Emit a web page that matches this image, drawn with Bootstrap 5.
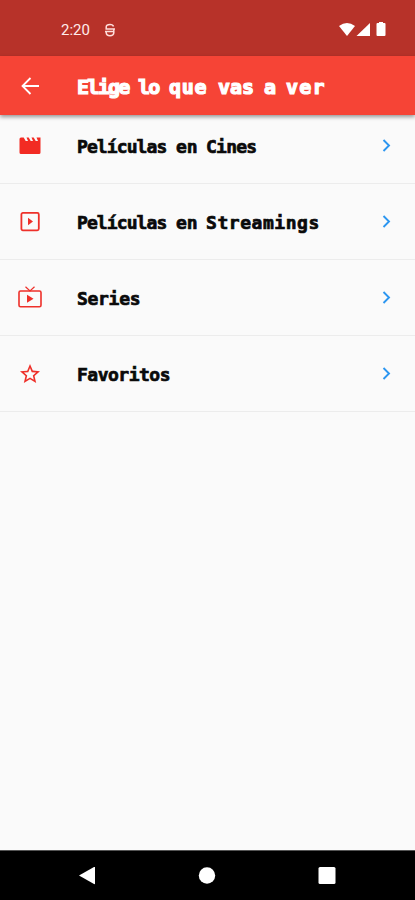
<!DOCTYPE html>
<html lang="es">
<head>
<meta charset="utf-8">
<meta name="viewport" content="width=device-width, initial-scale=1">
<title>Elige lo que vas a ver</title>
<link href="https://cdn.jsdelivr.net/npm/bootstrap@5.3.0/dist/css/bootstrap.min.css" rel="stylesheet">
<style>
  html, body { height: 100%; }
  body { background: #fafafa; font-family: Roboto, sans-serif; overflow: hidden; }
  svg { display: block; flex: none; }
  .status-bar { height: 56px; background: #b73229; padding: 4px 28px 0 61px; font-size: 15px; }
  .status-bar .clock { width: 43px; color: #ffeceb; }
  .app-bar { height: 59px; background: #f64436; padding: 0 0 0 18px; box-shadow: 0 2px 4px rgba(0,0,0,.4); z-index: 2; }
  .pixel-text { font-family: "DejaVu Sans Mono", monospace; font-weight: 700; white-space: nowrap; line-height: 1; }
  .pixel-text span { display: inline-block; flex: none; }
  .app-bar .pixel-text { font-size: 20px; margin: 2px 0 0 35px; -webkit-text-stroke: 1.2px #fff; }
  .menu-list { margin-top: -7px; }
  .menu-list .menu-row { height: 76px; padding: 0 19px 0 18px; background: #fafafa; border-width: 0 0 1px; border-color: #ececec; color: #0a0a0a; }
  .menu-row .pixel-text { font-size: 18px; margin: 3px 0 0 35px; -webkit-text-stroke: .7px #0a0a0a; }
  .menu-list .menu-row:last-child { border-bottom-width: 1px; }
  .w-peliculas { width: 99px; letter-spacing: -.9px; }
  .w-en { width: 30px; }
  .w-cines { letter-spacing: -.75px; }
  .w-streamings { letter-spacing: .55px; }
  .w-series { letter-spacing: -.3px; }
  .w-favoritos { letter-spacing: -.5px; }
  .t-elige { width: 61px; letter-spacing: -1.7px; }
  .t-lo { width: 31px; letter-spacing: -1.7px; }
  .t-que { width: 49px; letter-spacing: .7px; }
  .t-vas { width: 46px; }
  .t-a { width: 22px; }
  .t-ver { letter-spacing: 1.2px; }
  .nav-keys { height: 50px; padding: 0 79px 0 78px; border-top: 1px solid #555; }
</style>
<script src="https://cdn.jsdelivr.net/npm/bootstrap@5.3.0/dist/js/bootstrap.bundle.min.js"></script>
</head>
<body class="d-flex flex-column">
<header class="status-bar d-flex align-items-center flex-shrink-0 text-white">
  <span class="clock">2:20</span>
  <svg width="12" height="15" viewBox="0 0 12 15" fill="none" stroke="#ffdedb" stroke-width="1.500"><path d="M9.500 3.500Q9 1.500 6 1.500Q2.200 1.500 2.200 4V6H11M1 8.500H9.800V10Q9.500 12.700 6 12.700Q2.200 12.700 2.200 9.500V8.500M9.800 6V8.500"/></svg>
  <svg class="ms-auto" width="48" height="16" viewBox="0 0 48 16" fill="#fff"><path d="M0 4Q8-2 16 4L8 14Z"/><path d="M17.500 14L31 1V14Z"/><path d="M40 1V0H44V1H45.500Q46.500 1 46.500 2V13Q46.500 14 45.500 14H38.500Q37.500 14 37.500 13V2Q37.500 1 38.500 1Z"/></svg>
</header>
<nav class="app-bar d-flex align-items-center flex-shrink-0 position-relative text-white">
  <svg width="24" height="24" viewBox="0 0 24 24" fill="none" stroke="#fff" stroke-width="1.800"><path d="M21 12H5M12.500 4L4.500 12L12.500 20"/></svg>
  <h1 class="pixel-text d-flex mb-0"><span class="t-elige">Elige</span> <span class="t-lo">lo</span> <span class="t-que">que</span> <span class="t-vas">vas</span> <span class="t-a">a</span> <span class="t-ver">ver</span></h1>
</nav>
<main class="flex-grow-1">
  <div class="list-group list-group-flush menu-list">
    <a href="#" class="list-group-item menu-row d-flex align-items-center">
      <svg width="24" height="24" viewBox="0 0 24 24" fill="#f22b23"><path d="M18.500 3.500L20 7H17.700L15.700 3.500H13.500L15 7H12.700L10.700 3.500H8.500L10 7H7.700L5.700 3.500H3Q1.500 3.500 1.500 5V18.500Q1.500 20 3 20H21Q22.500 20 22.500 18.500V3.500Z"/></svg>
      <span class="pixel-text d-flex"><span class="w-peliculas">Películas</span> <span class="w-en">en</span> <span class="w-cines">Cines</span></span>
      <svg class="ms-auto" width="20" height="20" viewBox="0 0 20 20" fill="none" stroke="#2c96f0" stroke-width="1.900"><path d="M7.500 4L13 9.500L7.500 15"/></svg>
    </a>
    <a href="#" class="list-group-item menu-row d-flex align-items-center">
      <svg width="24" height="24" viewBox="0 0 24 24" fill="none" stroke="#ee302a" stroke-width="1.800"><rect x="3.400" y="2.900" width="17.400" height="17.400" rx="1.500"/><path d="M10 7.700L15 11.500L10 15.300Z" fill="#ee302a" stroke="none"/></svg>
      <span class="pixel-text d-flex"><span class="w-peliculas">Películas</span> <span class="w-en">en</span> <span class="w-streamings">Streamings</span></span>
      <svg class="ms-auto" width="20" height="20" viewBox="0 0 20 20" fill="none" stroke="#2c96f0" stroke-width="1.900"><path d="M7.500 4L13 9.500L7.500 15"/></svg>
    </a>
    <a href="#" class="list-group-item menu-row d-flex align-items-center">
      <svg width="24" height="24" viewBox="0 0 24 24" fill="none" stroke="#ee302a" stroke-width="1.600"><rect x="1" y="5" width="22" height="15.800" rx="1.500"/><path d="M7.500 .800L12 5L16.500 .800" stroke-width="1.200"/><path d="M9 8.800L15.500 12.800L9 16.800Z" fill="#ee302a" stroke="none"/></svg>
      <span class="pixel-text d-flex"><span class="w-series">Series</span></span>
      <svg class="ms-auto" width="20" height="20" viewBox="0 0 20 20" fill="none" stroke="#2c96f0" stroke-width="1.900"><path d="M7.500 4L13 9.500L7.500 15"/></svg>
    </a>
    <a href="#" class="list-group-item menu-row d-flex align-items-center">
      <svg width="24" height="24" viewBox="0 0 24 24" fill="#ee302a"><path d="M22 9.240l-7.190-.620L12 2 9.190 8.630 2 9.240l5.460 4.730L5.820 21 12 17.270 18.180 21l-1.630-7.030L22 9.240zM12 15.400l-3.760 2.270 1-4.280-3.320-2.880 4.380-.380L12 6.100l1.710 4.040 4.380.380-3.320 2.880 1 4.280L12 15.400z"/></svg>
      <span class="pixel-text d-flex"><span class="w-favoritos">Favoritos</span></span>
      <svg class="ms-auto" width="20" height="20" viewBox="0 0 20 20" fill="none" stroke="#2c96f0" stroke-width="1.900"><path d="M7.500 4L13 9.500L7.500 15"/></svg>
    </a>
  </div>
</main>
<footer class="nav-keys bg-black d-flex align-items-center justify-content-between flex-shrink-0">
  <svg width="18" height="18" viewBox="0 0 18 18" fill="#fff"><path d="M1 8.500L16 0Q17-.500 17 .500V16.500Q17 17.500 16 17Z"/></svg>
  <svg width="18" height="18" viewBox="0 0 18 18" fill="#fff"><circle cx="9" cy="8.500" r="8.200"/></svg>
  <svg width="18" height="18" viewBox="0 0 18 18" fill="#fff"><rect x=".500" y="0" width="17" height="17" rx="1.500"/></svg>
</footer>
</body>
</html>
